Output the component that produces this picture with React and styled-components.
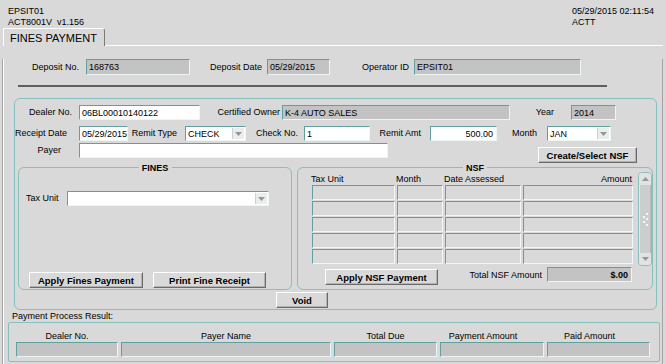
import { createGlobalStyle } from "styled-components";
import styled from "styled-components";

const BG = "#d9d9d9";
const GRAY = "#c3c3c3";
const TEAL = "#629f9f";
const TEAL_LINE = "#88bfbf";

const GlobalStyle = createGlobalStyle`
  body {
    margin: 0;
    background: ${BG};
    font-family: "Liberation Sans", Arial, sans-serif;
  }
`;

const Screen = styled.div`
  width: 666px;
  height: 364px;
  overflow: hidden;
  background: ${BG};
  font-size: 9px;
  color: #000;
  box-sizing: border-box;
`;

const Header = styled.div`
  display: flex;
  height: 28px;
  box-sizing: border-box;
  padding: 6px 0 0 8px;
  line-height: 11px;
`;

const HeaderRight = styled.div`
  margin-left: auto;
  width: 94px;
`;

const TabStrip = styled.div`
  display: flex;
  height: 18px;
`;

const Tab = styled.div`
  margin-left: 3px;
  width: 102px;
  box-sizing: border-box;
  padding-left: 6px;
  font-size: 11px;
  line-height: 18px;
  border-top: 1px solid #fff;
  border-left: 1px solid #fff;
  border-right: 1px solid #7a7a7a;
  border-top-right-radius: 3px;
`;

const TabFill = styled.div`
  flex: 1;
  border-bottom: 1px solid #fff;
  margin-right: 3px;
`;

const Content = styled.div`
  margin: 0 3px 0 2px;
  height: 318px;
  border-left: 1px solid #a4a4a4;
  border-right: 1px solid #a4a4a4;
  box-shadow: inset 1px 0 0 #fff;
  padding-left: 1px;
`;

const Row = styled.div`
  display: flex;
  align-items: flex-start;
  margin-top: ${({ $mt }) => $mt || 0}px;
  padding-left: ${({ $pl }) => $pl || 0}px;
`;

const Label = styled.div`
  flex-shrink: 0;
  width: ${({ $w }) => $w}px;
  height: ${({ $h }) => $h || 15}px;
  line-height: ${({ $h }) => $h || 15}px;
  box-sizing: border-box;
  padding-right: ${({ $pr }) => $pr || 0}px;
  text-align: ${({ $left }) => ($left ? "left" : "right")};
  white-space: nowrap;
`;

const Field = styled.div`
  flex-shrink: 0;
  display: flex;
  align-items: center;
  justify-content: ${({ $right }) => ($right ? "flex-end" : "flex-start")};
  width: ${({ $w }) => $w}px;
  height: ${({ $h }) => $h || 15}px;
  box-sizing: border-box;
  padding: 0 ${({ $right }) => ($right ? 3 : 1)}px 0 2px;
  background: ${({ $gray }) => ($gray ? GRAY : "#fff")};
  border: 1px solid;
  border-color: ${TEAL} #eef5f5 #eef5f5 ${TEAL};
  font-weight: ${({ $bold }) => ($bold ? "bold" : "normal")};
  white-space: nowrap;
  overflow: hidden;
`;

const ComboText = styled.span`
  flex: 1;
`;

const ComboArrow = styled.span`
  width: 11px;
  height: 11px;
  display: flex;
  align-items: center;
  justify-content: center;
  background: #ececec;
  border-left: 1px solid #d0d0d0;
`;

const Button = styled.button`
  flex-shrink: 0;
  width: ${({ $w }) => $w}px;
  height: 16px;
  margin: ${({ $mt }) => $mt || 0}px 0 0 ${({ $ml }) => $ml || 0}px;
  padding: 0;
  box-sizing: border-box;
  background: ${BG};
  border: 1px solid;
  border-color: #fff #6a6a6a #6a6a6a #fff;
  box-shadow: inset -1px -1px 0 #b2b2b2;
  font-family: "Liberation Sans", Arial, sans-serif;
  font-size: 9.5px;
  font-weight: bold;
  color: #000;
`;

const Separator = styled.div`
  margin: 10px 0 0 14px;
  width: 589px;
  height: 2px;
  background: #5e5e5e;
`;

const DealerPanel = styled.div`
  margin: 11px 0 0 10px;
  width: 643px;
  height: 212px;
  box-sizing: border-box;
  border: 1px solid ${TEAL_LINE};
  border-radius: 6px;
  padding-top: 6px;
`;

const BoxRow = styled.div`
  display: flex;
  margin: 4px 0 0 3px;
`;

const GroupBox = styled.div`
  position: relative;
  display: flex;
  flex-direction: column;
  width: ${({ $w }) => $w}px;
  height: 123px;
  margin-left: ${({ $ml }) => $ml || 0}px;
  box-sizing: border-box;
  border: 1px solid ${TEAL_LINE};
  border-radius: 6px;
`;

const GroupTitle = styled.div`
  position: absolute;
  top: -5px;
  left: 50%;
  transform: translateX(-50%);
  padding: 0 3px;
  background: ${BG};
  font-weight: bold;
  line-height: 11px;
`;

const FinesButtons = styled.div`
  display: flex;
  margin: auto 0 1px 10px;
`;

const NsfBody = styled.div`
  display: flex;
  padding: 4px 0 0 14px;
`;

const NsfTable = styled.div`
  width: 321px;
`;

const NsfHead = styled.div`
  display: grid;
  grid-template-columns: 83px 46px 76px 110px;
  column-gap: 2px;
  height: 13px;
  box-sizing: border-box;
  padding-top: 2px;
  line-height: 11px;
`;

const HeadCell = styled.div`
  margin-left: ${({ $right }) => ($right ? 0 : -1)}px;
  padding-right: ${({ $right }) => ($right ? 1 : 0)}px;
  text-align: ${({ $right }) => ($right ? "right" : "left")};
`;

const NsfGrid = styled.div`
  display: grid;
  grid-template-columns: 83px 46px 76px 110px;
  grid-auto-rows: 15px;
  column-gap: 2px;
  row-gap: 1px;
`;

const Cell = styled.div`
  box-sizing: border-box;
  border: 1px solid;
  border-color: ${TEAL} #f2f6f6 #f2f6f6 ${TEAL};
`;

const Scroll = styled.div`
  display: flex;
  flex-direction: column;
  margin-left: 5px;
  width: 14px;
  height: 94px;
  box-sizing: border-box;
  border: 1px solid ${TEAL_LINE};
  border-radius: 4px;
  overflow: hidden;
`;

const ScrollBtn = styled.div`
  height: 12px;
  display: flex;
  align-items: center;
  justify-content: center;
  background: #e2e2e2;
`;

const ScrollTrack = styled.div`
  flex: 1;
  display: flex;
  align-items: center;
  justify-content: center;
  background: #cdcdcd;
  border-left: 1px solid #e8e8e8;
  border-right: 1px solid #b8b8b8;
`;

const NsfFooter = styled.div`
  display: flex;
  align-items: flex-start;
  margin-top: 1px;
  padding-left: 27px;
`;

const ResultLabel = styled.div`
  height: 12px;
  line-height: 12px;
  padding-left: 8px;
`;

const ResultPanel = styled.div`
  margin-left: 4px;
  width: 652px;
  height: 40px;
  box-sizing: border-box;
  border: 1px solid ${TEAL_LINE};
  border-radius: 2px;
  padding: 7px 0 0 7px;
`;

const ResultGrid = styled.div`
  display: grid;
  grid-template-columns: 102px 210px 103px 104px 103px;
  grid-template-rows: 12px 15px;
  column-gap: 3px;
`;

const ResultHead = styled.div`
  text-align: center;
  line-height: 12px;
  margin-left: ${({ $shift }) => $shift || 0}px;
`;

const Arrow = ({ up }) => (
  <svg width="7" height="4" viewBox="0 0 7 4">
    <path d={up ? "M0 4 L3.5 0 L7 4 Z" : "M0 0 L7 0 L3.5 4 Z"} fill="#8c9a9a" />
  </svg>
);

const Combo = ({ w, gray, children }) => (
  <Field $w={w} $gray={gray} style={{ paddingRight: 1 }}>
    <ComboText>{children}</ComboText>
    <ComboArrow>
      <Arrow />
    </ComboArrow>
  </Field>
);

const Grip = () => (
  <svg width="8" height="14" viewBox="0 0 8 14">
    {[
      [5, 1],
      [2, 4],
      [5, 6],
      [2, 9],
      [5, 12],
    ].map(([x, y]) => (
      <rect key={`${x}-${y}`} x={x} y={y} width="2" height="2" fill="#f6f6f6" />
    ))}
  </svg>
);

const nsfRows = [0, 1, 2, 3, 4];

const App = () => (
  <Screen>
    <GlobalStyle />
    <Header>
      <div>
        <div>EPSIT01</div>
        <div>ACT8001V&nbsp; v1.156</div>
      </div>
      <HeaderRight>
        <div>05/29/2015 02:11:54</div>
        <div>ACTT</div>
      </HeaderRight>
    </Header>
    <TabStrip>
      <Tab>FINES PAYMENT</Tab>
      <TabFill />
    </TabStrip>
    <Content>
      <Row $mt={13}>
        <Label $w={82} $pr={7} $h={16}>Deposit No.</Label>
        <Field $w={104} $h={16} $gray>168763</Field>
        <Label $w={77} $pr={5} $h={16}>Deposit Date</Label>
        <Field $w={63} $h={16} $gray>05/29/2015</Field>
        <Label $w={84} $pr={5} $h={16}>Operator ID</Label>
        <Field $w={167} $h={16} $gray>EPSIT01</Field>
      </Row>
      <Separator />
      <DealerPanel>
        <Row>
          <Label $w={64} $pr={7}>Dealer No.</Label>
          <Field $w={121}>06BL00010140122</Field>
          <Label $w={82} $pr={2}>Certified Owner</Label>
          <Field $w={228} $gray>K-4 AUTO SALES</Field>
          <Label $w={61} $pr={17}>Year</Label>
          <Field $w={45} $gray>2014</Field>
        </Row>
        <Row $mt={6}>
          <Label $w={64} $pr={12}>Receipt Date</Label>
          <Field $w={49}>05/29/2015</Field>
          <Label $w={57} $pr={8}>Remit Type</Label>
          <Combo w={61}>CHECK</Combo>
          <Label $w={58} $pr={6}>Check No.</Label>
          <Field $w={66}>1</Field>
          <Label $w={60} $pr={9}>Remit Amt</Label>
          <Field $w={67} $right>500.00</Field>
          <Label $w={50} $pr={10}>Month</Label>
          <Combo w={64}>JAN</Combo>
        </Row>
        <Row $mt={2}>
          <Label $w={64} $pr={18}>Payer</Label>
          <Field $w={309} />
          <Button $w={99} $ml={150} $mt={4}>Create/Select NSF</Button>
        </Row>
        <BoxRow>
          <GroupBox $w={274}>
            <GroupTitle>FINES</GroupTitle>
            <Row $mt={23} $pl={7}>
              <Label $w={41} $left>Tax Unit</Label>
              <Combo w={202} />
            </Row>
            <FinesButtons>
              <Button $w={114}>Apply Fines Payment</Button>
              <Button $w={113} $ml={10}>Print Fine Receipt</Button>
            </FinesButtons>
          </GroupBox>
          <GroupBox $w={356} $ml={5}>
            <GroupTitle>NSF</GroupTitle>
            <NsfBody>
              <NsfTable>
                <NsfHead>
                  <HeadCell>Tax Unit</HeadCell>
                  <HeadCell>Month</HeadCell>
                  <HeadCell>Date Assessed</HeadCell>
                  <HeadCell $right>Amount</HeadCell>
                </NsfHead>
                <NsfGrid>
                  {nsfRows.map((r) =>
                    [0, 1, 2, 3].map((c) => <Cell key={`${r}-${c}`} />)
                  )}
                </NsfGrid>
              </NsfTable>
              <Scroll>
                <ScrollBtn>
                  <Arrow up />
                </ScrollBtn>
                <ScrollTrack>
                  <Grip />
                </ScrollTrack>
                <ScrollBtn>
                  <Arrow />
                </ScrollBtn>
              </Scroll>
            </NsfBody>
            <NsfFooter>
              <Button $w={113} $mt={2}>Apply NSF Payment</Button>
              <Label $w={109} $pr={5} $h={16}>Total NSF Amount</Label>
              <Field $w={85} $gray $right $bold>$.00</Field>
            </NsfFooter>
          </GroupBox>
        </BoxRow>
        <Button $w={52} $ml={261} $mt={2}>Void</Button>
      </DealerPanel>
      <ResultLabel>Payment Process Result:</ResultLabel>
      <ResultPanel>
        <ResultGrid>
          <ResultHead>Dealer No.</ResultHead>
          <ResultHead>Payer Name</ResultHead>
          <ResultHead>Total Due</ResultHead>
          <ResultHead $shift={-18}>Payment Amount</ResultHead>
          <ResultHead $shift={-18}>Paid Amount</ResultHead>
          <Field $w={102} $gray />
          <Field $w={210} $gray />
          <Field $w={103} $gray />
          <Field $w={104} $gray />
          <Field $w={103} $gray />
        </ResultGrid>
      </ResultPanel>
    </Content>
  </Screen>
);

export default App;
